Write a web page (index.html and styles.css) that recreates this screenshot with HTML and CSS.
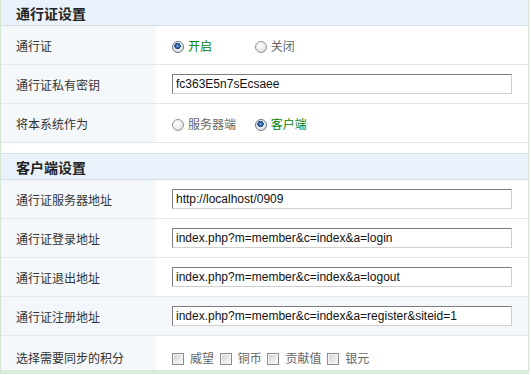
FILE: index.html
```html
<!DOCTYPE html>
<html lang="zh-CN">
<head>
    <meta charset="UTF-8">
    <meta name="viewport" content="width=device-width, initial-scale=1.0">
    <title>通行证设置</title>
    <link rel="stylesheet" href="styles.css">
</head>
<body>
    <div class="wrap">
        <table class="form-table">
            <colgroup><col class="col-label"><col></colgroup>
            <tr class="caption">
                <th colspan="2">通行证设置</th>
            </tr>
            <tr>
                <th>通行证</th>
                <td>
                    <label class="opt on"><input type="radio" class="radio" name="sso" checked>开启</label>
                    <label class="opt"><input type="radio" class="radio" name="sso">关闭</label>
                </td>
            </tr>
            <tr>
                <th>通行证私有密钥</th>
                <td><input type="text" class="text" value="fc363E5n7sEcsaee"></td>
            </tr>
            <tr>
                <th>将本系统作为</th>
                <td>
                    <label class="opt"><input type="radio" class="radio" name="mode">服务器端</label>
                    <label class="opt on"><input type="radio" class="radio" name="mode" checked>客户端</label>
                </td>
            </tr>
        </table>

        <table class="form-table second">
            <colgroup><col class="col-label"><col></colgroup>
            <tr class="caption">
                <th colspan="2">客户端设置</th>
            </tr>
            <tr>
                <th>通行证服务器地址</th>
                <td><input type="text" class="text" value="http://localhost/0909"></td>
            </tr>
            <tr>
                <th>通行证登录地址</th>
                <td><input type="text" class="text" value="index.php?m=member&amp;c=index&amp;a=login"></td>
            </tr>
            <tr>
                <th>通行证退出地址</th>
                <td><input type="text" class="text" value="index.php?m=member&amp;c=index&amp;a=logout"></td>
            </tr>
            <tr class="hover">
                <th>通行证注册地址</th>
                <td><input type="text" class="text" value="index.php?m=member&amp;c=index&amp;a=register&amp;siteid=1"></td>
            </tr>
            <tr class="last">
                <th>选择需要同步的积分</th>
                <td>
                    <label class="chk"><input type="checkbox" class="checkbox">威望</label>
                    <label class="chk"><input type="checkbox" class="checkbox">铜币</label>
                    <label class="chk"><input type="checkbox" class="checkbox">贡献值</label>
                    <label class="chk"><input type="checkbox" class="checkbox">银元</label>
                </td>
            </tr>
        </table>
    </div>
</body>
</html>
```

FILE: styles.css
```css
body {
    margin: 0;
    font-family: "Noto Sans CJK SC", "Liberation Sans", sans-serif;
    font-size: 12px;
    color: #333;
    background: #fff;
}
.wrap {
    width: 527px;
    border-left: 1px solid #d3e6d3;
    border-right: 1px solid #d3e6d3;
    border-bottom: 4px solid #d9ecd9;
    height: 370px;
    overflow: hidden;
}
.form-table {
    width: 100%;
    border-collapse: collapse;
    table-layout: fixed;
}
.form-table.second {
    margin-top: 10px;
    border-top: 1px solid #d6dfe8;
}
.col-label {
    width: 155px;
}
.form-table th,
.form-table td {
    height: 38px;
    padding: 0;
    border-bottom: 1px solid #e3e7eb;
    text-align: left;
    vertical-align: middle;
}
.form-table th {
    padding-left: 15px;
    font-weight: normal;
    background-color: #f5f8fb;
}
.form-table td {
    padding-left: 16px;
}
.form-table .caption th {
    height: 25px;
    font-size: 14px;
    font-weight: bold;
    color: #222;
    background-color: #e9f2fa;
    border-bottom: 1px solid #d6dfe8;
}
.form-table .hover th,
.form-table .hover td {
    background-color: #f3f7fb;
}
.form-table .last th,
.form-table .last td {
    border-bottom: none;
    padding-top: 2px;
}
.text {
    box-sizing: border-box;
    width: 340px;
    height: 20px;
    margin: 0;
    padding: 0 3px;
    border: 1px solid;
    border-color: #7c7c7c #cfcfcf #cfcfcf #7c7c7c;
    font-family: "Liberation Sans", Arial, sans-serif;
    font-size: 12px;
    color: #111;
    vertical-align: middle;
}
.opt {
    display: inline-block;
    width: 80px;
    color: #666;
}
.opt.on {
    color: #078007;
}
.radio {
    appearance: none;
    -webkit-appearance: none;
    box-sizing: border-box;
    width: 12px;
    height: 12px;
    margin: 0 4px 0 0;
    border: 1px solid #959595;
    border-radius: 50%;
    background: radial-gradient(circle at 40% 35%, #fff 0, #ececec 55%, #cdcdcd 100%);
    vertical-align: -2px;
}
.radio:checked {
    border-color: #6b7b8f;
    background:
        radial-gradient(circle at 45% 40%, #9cc0ea 0, #2f63a8 1.6px, #1d4378 3px, rgba(0,0,0,0) 3.4px),
        radial-gradient(circle at 40% 35%, #fff 0, #ececec 55%, #cdcdcd 100%);
}
.chk {
    margin-right: 3px;
    color: #666;
}
.checkbox {
    appearance: none;
    -webkit-appearance: none;
    box-sizing: border-box;
    width: 12px;
    height: 12px;
    margin: 0 6px 0 0;
    border: 1px solid #8c8c8c;
    background: linear-gradient(135deg, #cfcfcf 0, #e9e9e9 55%, #fbfbfb 100%);
    box-shadow: inset 0 0 0 1px #f4f4f4;
    vertical-align: -2px;
}
```
